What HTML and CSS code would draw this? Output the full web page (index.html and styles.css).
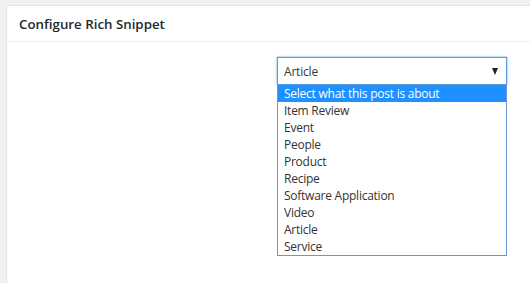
FILE: index.html
```html
<!DOCTYPE html>
<html>
<head>
<meta charset="utf-8">
<link rel="stylesheet" href="styles.css">
</head>
<body>
<div class="panel">
  <div class="panel-head"><h2 class="title">Configure Rich Snippet</h2></div>
  <div class="panel-body">
    <div class="select-wrap">
      <div class="select">
        <span class="select-value">Article</span>
        <span class="arrow"></span>
      </div>
      <ul class="options">
        <li class="option selected">Select what this post is about</li>
        <li class="option">Item Review</li>
        <li class="option">Event</li>
        <li class="option">People</li>
        <li class="option">Product</li>
        <li class="option">Recipe</li>
        <li class="option">Software Application</li>
        <li class="option">Video</li>
        <li class="option">Article</li>
        <li class="option">Service</li>
      </ul>
    </div>
  </div>
</div>
</body>
</html>
```
FILE: styles.css
```css
html, body {
  margin: 0;
  padding: 0;
  background: #f1f1f1;
  font-family: "Open Sans", "Noto Sans", sans-serif;
  color: #23282d;
  overflow: hidden;
}
.panel {
  margin: 5px 0 0 6px;
  background: #fff;
  border: 1px solid #e5e5e5;
  border-right: none;
  border-bottom: none;
  height: 277px;
}
.panel-head {
  height: 35px;
  border-bottom: 1px solid #eeeeee;
  display: flex;
  align-items: center;
  padding-left: 12px;
}
.title {
  margin: 0;
  font-size: 13.3px;
  font-weight: 600;
  color: #23282d;
}
.panel-body {
  padding: 15px 0 0 270px;
}
.select-wrap {
  position: relative;
  width: 230px;
}
.select {
  box-sizing: border-box;
  height: 28px;
  border: 1px solid #5b9dd9;
  box-shadow: 0 0 2px rgba(30, 140, 190, 0.8);
  display: flex;
  align-items: center;
  justify-content: space-between;
  padding: 1px 8px 0 6px;
  font-size: 12px;
  letter-spacing: -0.2px;
  color: #32373c;
}
.arrow {
  width: 0;
  height: 0;
  border-left: 3.5px solid transparent;
  border-right: 3.5px solid transparent;
  border-top: 7px solid #222;
}
.options {
  position: absolute;
  left: 0;
  top: 28px;
  width: 230px;
  box-sizing: border-box;
  margin: 0;
  padding: 0;
  list-style: none;
  background: #fff;
  border: 1px solid #6f94d6;
  border-top: none;
}
.option {
  height: 17px;
  line-height: 18px;
  padding-left: 6px;
  font-size: 12px;
  letter-spacing: -0.25px;
  color: #333;
  white-space: nowrap;
}
.option.selected {
  background: #1e90ff;
  color: #fff;
}
```
